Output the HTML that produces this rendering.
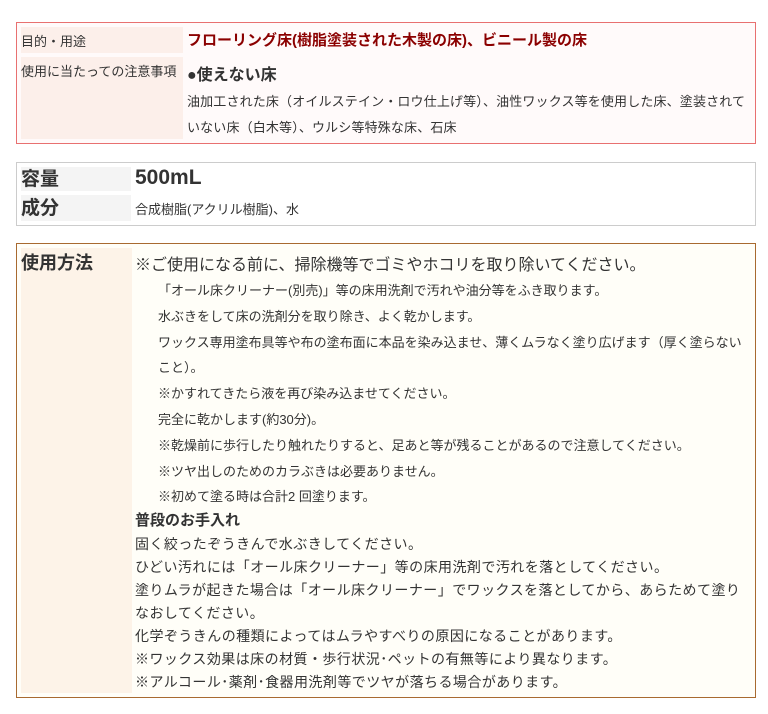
<!DOCTYPE html>
<html><head><meta charset="utf-8"><style>
body{margin:0;width:768px;height:714px;background:#fff;font-family:"Liberation Sans","Noto Sans CJK JP",sans-serif;color:#333;position:relative;overflow:hidden}
.a{position:absolute;white-space:nowrap}
.box{position:absolute;box-sizing:border-box}
</style></head><body>
<div class="box" style="left:16px;top:22px;width:740px;height:122px;border:1px solid #e87070;background:#fffafa"></div>
<div class="box" style="left:21px;top:27px;width:162px;height:26px;background:#fcefea"></div>
<div class="box" style="left:21px;top:57px;width:162px;height:82px;background:#fcefea"></div>
<div class="a" style="left:21px;top:31px;font-size:13px">目的・用途</div>
<div class="a" style="left:21px;top:61px;font-size:13px">使用に当たっての注意事項</div>
<div class="a" style="left:187px;top:29px;font-size:15px;font-weight:bold;color:#8b0000">フローリング床(樹脂塗装された木製の床)、ビニール製の床</div>
<div class="a" style="left:187px;top:61px;font-size:16px;font-weight:bold">●使えない床</div>
<div class="a" style="left:187px;top:91px;font-size:13px;letter-spacing:0.15px">油加工された床（オイルステイン・ロウ仕上げ等）、油性ワックス等を使用した床、塗装されて</div>
<div class="a" style="left:187px;top:117px;font-size:13px;letter-spacing:0.15px">いない床（白木等）、ウルシ等特殊な床、石床</div>

<div class="box" style="left:16px;top:162px;width:740px;height:64px;border:1px solid #ccc"></div>
<div class="box" style="left:21px;top:167px;width:110px;height:24px;background:#f4f4f4"></div>
<div class="box" style="left:21px;top:195px;width:110px;height:26px;background:#f4f4f4"></div>
<div class="a" style="left:21px;top:164px;font-size:19px;font-weight:bold">容量</div>
<div class="a" style="left:21px;top:193px;font-size:19px;font-weight:bold">成分</div>
<div class="a" style="left:135px;top:166px;font-size:21px;font-weight:bold">500mL</div>
<div class="a" style="left:135px;top:199px;font-size:13px">合成樹脂(アクリル樹脂)、水</div>

<div class="box" style="left:16px;top:243px;width:740px;height:455px;border:1px solid #a86a30;background:#fffef8"></div>
<div class="box" style="left:21px;top:248px;width:111px;height:445px;background:#fdf3e8"></div>
<div class="a" style="left:21px;top:249px;font-size:18px;font-weight:bold">使用方法</div>
<div class="a" style="left:135px;top:251px;font-size:16px">※ご使用になる前に、掃除機等でゴミやホコリを取り除いてください。</div>
<div style="position:absolute;left:158px;top:278px;font-size:13px;line-height:25.8px;width:590px">
<div>「オール床クリーナー(別売)」等の床用洗剤で汚れや油分等をふき取ります。</div>
<div>水ぶきをして床の洗剤分を取り除き、よく乾かします。</div>
<div>ワックス専用塗布具等や布の塗布面に本品を染み込ませ、薄くムラなく塗り広げます（厚く塗らない</div>
<div>こと）。</div>
<div>※かすれてきたら液を再び染み込ませてください。</div>
<div>完全に乾かします(約30分)。</div>
<div>※乾燥前に歩行したり触れたりすると、足あと等が残ることがあるので注意してください。</div>
<div>※ツヤ出しのためのカラぶきは必要ありません。</div>
<div>※初めて塗る時は合計2 回塗ります。</div>
</div>
<div class="a" style="left:135px;top:509px;font-size:15px;font-weight:bold">普段のお手入れ</div>
<div style="position:absolute;left:135px;top:533px;font-size:14px;line-height:23px;width:620px;letter-spacing:0.45px;white-space:nowrap">
<div>固く絞ったぞうきんで水ぶきしてください。</div>
<div>ひどい汚れには「オール床クリーナー」等の床用洗剤で汚れを落としてください。</div>
<div>塗りムラが起きた場合は「オール床クリーナー」でワックスを落としてから、あらためて塗り</div>
<div>なおしてください。</div>
<div>化学ぞうきんの種類によってはムラやすべりの原因になることがあります。</div>
<div>※ワックス効果は床の材質・歩行状況･ペットの有無等により異なります。</div>
<div>※アルコール･薬剤･食器用洗剤等でツヤが落ちる場合があります。</div>
</div>
</body></html>
